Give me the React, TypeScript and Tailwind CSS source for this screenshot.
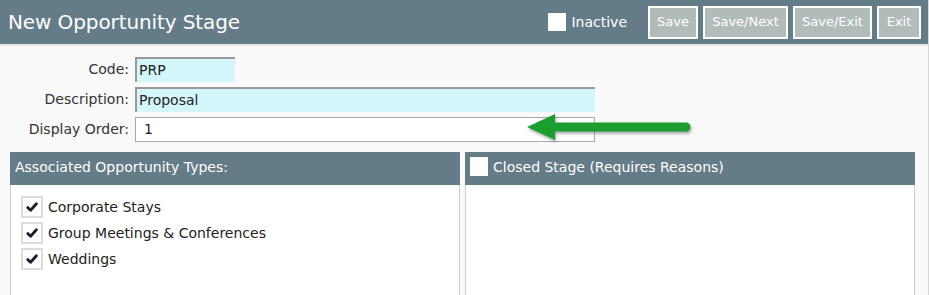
import React from 'react';

const font = { fontFamily: '"DejaVu Sans", Verdana, sans-serif' };

function CheckRow({ label }: { label: string }) {
    return (
        <div className="flex items-center gap-[5px] h-[26px]">
            <div className="w-[22px] h-[22px] border-2 border-[#dcdcdc] bg-white flex items-center justify-center">
                <svg width="12" height="10" viewBox="0 0 12 10">
                    <path d="M1.8 5.6 L4.6 8.2 L10.4 1.8" fill="none" stroke="#15202c" strokeWidth="2.8" strokeLinecap="round" strokeLinejoin="round" />
                </svg>
            </div>
            <span className="text-[14px] text-[#222]">{label}</span>
        </div>
    );
}

export default function App() {
    const buttons = [
        { label: 'Save', w: 'w-[50px]' },
        { label: 'Save/Next', w: 'w-[85px]' },
        { label: 'Save/Exit', w: 'w-[79px]' },
        { label: 'Exit', w: 'w-[44px]' },
    ];

    return (
        <div className="w-[929px] h-[295px] bg-[#f9f9f9] overflow-hidden border-r-[1.5px] border-[#d8d8d8]" style={font}>
            {/* Header */}
            <header className="h-[44px] bg-[#647b88] flex items-center pl-2 pr-[7px] border-b-2 border-[#e6e6e6] box-content">
                <h1 className="text-[20px] text-white flex-1 tracking-[-0.1px]">New Opportunity Stage</h1>
                <div className="flex items-center gap-[5px] mr-[21px]">
                    <div className="w-[18px] h-[18px] bg-white" />
                    <span className="text-[14px] text-white">Inactive</span>
                </div>
                <div className="flex gap-[5px]">
                    {buttons.map((b) => (
                        <button
                            key={b.label}
                            className={`${b.w} h-[33px] bg-[#b1bbba] border-2 border-white text-white text-[13px] flex items-center justify-center`}
                        >
                            {b.label}
                        </button>
                    ))}
                </div>
            </header>

            {/* Form */}
            <div className="relative pt-[11px] grid grid-cols-[129px_1fr] gap-x-[6px] gap-y-[5px] text-[14px] text-[#333]">
                <label className="text-right self-center">Code:</label>
                <div className="w-[100px] h-[25px] bg-[#d2f6f9] border-t-2 border-l-2 border-[#999] pl-[2px] flex items-center text-[#222]">PRP</div>

                <label className="text-right self-center">Description:</label>
                <div className="w-[460px] h-[25px] bg-[#d2f6f9] border-t-2 border-l-2 border-[#999] pl-[2px] flex items-center text-[#222]">Proposal</div>

                <label className="text-right self-center">Display Order:</label>
                <div className="w-[460px] h-[25px] bg-white border border-[#a8a8a8] pl-[8px] flex items-center text-[#222]">1</div>

                {/* Green arrow annotation */}
                <svg className="absolute left-[520px] top-[66px]" width="180" height="40" viewBox="0 0 180 40" style={{ filter: 'drop-shadow(1px 2px 1.5px rgba(0,0,0,0.35))' }}>
                    <path d="M7 15 L35 2 L35 10.5 L166 10.5 A4.5 4.5 0 0 1 166 19.5 L35 19.5 L35 28 Z" fill="#1c9e2e" />
                </svg>
            </div>

            {/* Panels */}
            <div className="flex gap-[5px] px-[10px] mt-[10px]">
                <section className="w-[450px]">
                    <div className="h-[33px] bg-[#647b88] flex items-start pt-[5px] px-[5px] text-white text-[14px]">
                        Associated Opportunity Types:
                    </div>
                    <div className="h-[120px] bg-white border border-t-0 border-[#cfcfcf] pt-[9px] pl-[10px]">
                        <CheckRow label="Corporate Stays" />
                        <CheckRow label="Group Meetings & Conferences" />
                        <CheckRow label="Weddings" />
                    </div>
                </section>
                <section className="w-[450px]">
                    <div className="h-[33px] bg-[#647b88] flex items-start gap-[5px] pt-[5px] px-[5px] text-white text-[14px]">
                        <div className="w-[18px] h-[19px] bg-white" />
                        Closed Stage (Requires Reasons)
                    </div>
                    <div className="h-[120px] bg-white border border-t-0 border-[#cfcfcf]" />
                </section>
            </div>
        </div>
    );
}
